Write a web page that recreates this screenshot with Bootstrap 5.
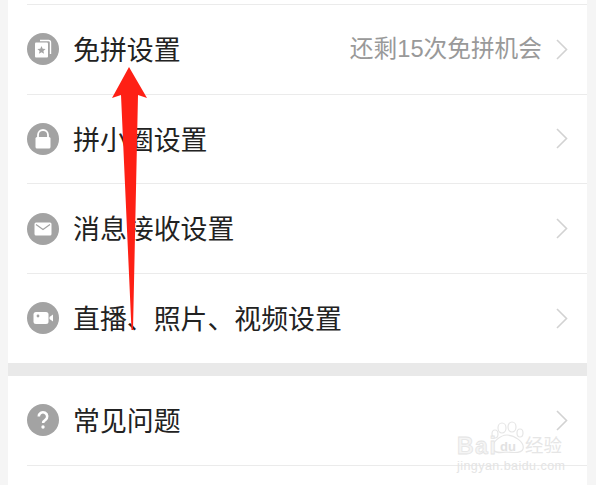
<!DOCTYPE html>
<html lang="zh-CN">
<head>
    <meta charset="UTF-8">
    <meta name="viewport" content="width=device-width, initial-scale=1">
    <title>设置</title>
    <link href="https://cdn.jsdelivr.net/npm/bootstrap@5.3.0/dist/css/bootstrap.min.css" rel="stylesheet">
    <script src="https://cdn.jsdelivr.net/npm/bootstrap@5.3.0/dist/js/bootstrap.bundle.min.js"></script>
    <style>
        html, body {
            height: 485px;
            overflow: hidden;
        }
        body {
            background: #f5f5f5;
            font-family: "Liberation Sans", "Noto Sans CJK SC", sans-serif;
            position: relative;
        }
        .panel {
            margin: 0 9px 0 8px;
            background: #fff;
            height: 485px;
            overflow: hidden;
        }
        .top-strip {
            height: 4px;
        }
        .set-row {
            height: 89.67px;
            margin-left: 19px;
            border-top: 1px solid #ebebeb;
            padding-right: 19px;
        }
        .set-row.no-line {
            border-top: 0;
        }
        .set-row.tail-row {
            height: 19px;
        }
        .ico {
            width: 32px;
            height: 32px;
            border-radius: 50%;
            background: #a3a3a3;
            flex: none;
        }
        .ico svg {
            display: block;
        }
        .set-name {
            font-size: 26.9px;
            line-height: 1;
            color: #222;
            margin-left: 14px;
            padding-top: 4px;
        }
        .set-hint {
            font-size: 23.7px;
            line-height: 1;
            color: #999;
            margin-right: 14px;
            padding-top: 1px;
        }
        .sect-gap {
            height: 13px;
            background: #e9e9e9;
        }
        .arrow-mark {
            position: absolute;
            left: 0;
            top: 0;
        }
        .wm {
            position: absolute;
            left: 457px;
            top: 420px;
            width: 110px;
            height: 60px;
            color: #f5f5f5;
        }
        .wm-paw {
            position: absolute;
            left: 32px;
            top: 1px;
        }
        .wm-bai {
            position: absolute;
            left: 0;
            top: 15px;
            font-size: 23px;
            font-weight: 700;
            line-height: 1;
            letter-spacing: 1.5px;
            -webkit-text-stroke: .8px #e4e4e4;
        }
        .wm-du {
            position: absolute;
            left: 43px;
            top: 20px;
            font-size: 13px;
            font-weight: 700;
            line-height: 1;
            color: #e2e2e2;
        }
        .wm-cn {
            position: absolute;
            left: 68px;
            top: 17px;
            font-size: 18.5px;
            line-height: 1;
            color: #e6e6e6;
        }
        .wm-url {
            position: absolute;
            left: 0;
            top: 40px;
            font-size: 12.5px;
            line-height: 1;
            letter-spacing: .45px;
            white-space: nowrap;
            color: #e4e4e4;
        }
    </style>
</head>
<body>
    <div class="panel">
        <div class="top-strip"></div>

        <div class="set-row d-flex align-items-center">
            <span class="ico d-flex align-items-center justify-content-center">
                <svg width="32" height="32" viewBox="0 0 32 32">
                    <path d="M13 7.5h8.5a2 2 0 0 1 2 2v11.5" fill="none" stroke="#fff" stroke-width="1.4"/>
                    <rect x="8" y="9.5" width="13" height="15" rx="1" fill="#fff"/>
                    <path d="M14.5 13l1.2 2.7 2.9.3-2.2 1.9.7 2.9-2.6-1.5-2.6 1.5.7-2.9-2.2-1.9 2.9-.3z" fill="#a3a3a3"/>
                </svg>
            </span>
            <span class="set-name">免拼设置</span>
            <span class="set-hint ms-auto">还剩15次免拼机会</span>
            <svg width="12" height="21" viewBox="0 0 12 21"><path d="M1 1l9.5 9.5L1 20" fill="none" stroke="#d2d2d2" stroke-width="1.6"/></svg>
        </div>

        <div class="set-row d-flex align-items-center">
            <span class="ico d-flex align-items-center justify-content-center">
                <svg width="32" height="32" viewBox="0 0 32 32">
                    <path d="M11 15v-3a5 5 0 0 1 10 0v3" fill="none" stroke="#fff" stroke-width="1.8"/>
                    <rect x="8.5" y="14" width="15" height="11.5" rx="1.5" fill="#fff"/>
                </svg>
            </span>
            <span class="set-name">拼小圈设置</span>
            <svg class="ms-auto" width="12" height="21" viewBox="0 0 12 21"><path d="M1 1l9.5 9.5L1 20" fill="none" stroke="#d2d2d2" stroke-width="1.6"/></svg>
        </div>

        <div class="set-row d-flex align-items-center">
            <span class="ico d-flex align-items-center justify-content-center">
                <svg width="32" height="32" viewBox="0 0 32 32">
                    <rect x="7.5" y="9.5" width="17" height="13" rx="1.5" fill="#fff"/>
                    <path d="M9 11.5l7 5 7-5" fill="none" stroke="#a3a3a3" stroke-width="1.2"/>
                </svg>
            </span>
            <span class="set-name">消息接收设置</span>
            <svg class="ms-auto" width="12" height="21" viewBox="0 0 12 21"><path d="M1 1l9.5 9.5L1 20" fill="none" stroke="#d2d2d2" stroke-width="1.6"/></svg>
        </div>

        <div class="set-row d-flex align-items-center">
            <span class="ico d-flex align-items-center justify-content-center">
                <svg width="32" height="32" viewBox="0 0 32 32">
                    <rect x="6.5" y="10" width="15" height="12" rx="2.5" fill="#fff"/>
                    <path d="M22.5 15l3.5-2.5v7L22.5 17z" fill="#fff"/>
                    <circle cx="11" cy="14" r="1.4" fill="#a3a3a3"/>
                </svg>
            </span>
            <span class="set-name">直播、照片、视频设置</span>
            <svg class="ms-auto" width="12" height="21" viewBox="0 0 12 21"><path d="M1 1l9.5 9.5L1 20" fill="none" stroke="#d2d2d2" stroke-width="1.6"/></svg>
        </div>

        <div class="sect-gap"></div>

        <div class="set-row no-line d-flex align-items-center">
            <span class="ico d-flex align-items-center justify-content-center">
                <svg width="32" height="32" viewBox="0 0 32 32">
                    <path d="M11.8 12.5a4.2 4.2 0 1 1 6.6 3.4c-1.5 1-2.3 1.7-2.3 3.2" fill="none" stroke="#fff" stroke-width="2.6"/>
                    <circle cx="16" cy="23" r="1.7" fill="#fff"/>
                </svg>
            </span>
            <span class="set-name">常见问题</span>
            <svg class="ms-auto" width="12" height="21" viewBox="0 0 12 21"><path d="M1 1l9.5 9.5L1 20" fill="none" stroke="#d2d2d2" stroke-width="1.6"/></svg>
        </div>

        <div class="set-row tail-row"></div>
    </div>

    <!-- red annotation arrow drawn over the list -->
    <svg class="arrow-mark" width="596" height="485" viewBox="0 0 596 485">
        <path d="M129 67L147 98 138 95 133 330 131.5 330 121 95 112 98z" fill="#fe2015"/>
    </svg>

    <!-- baidu jingyan watermark -->
    <div class="wm">
        <svg class="wm-paw" width="38" height="36" viewBox="0 0 38 36">
            <g fill="none" stroke="#e6e6e6" stroke-width="1.2">
                <ellipse cx="13" cy="7" rx="4" ry="5"/>
                <ellipse cx="23" cy="6" rx="4" ry="5"/>
                <ellipse cx="6" cy="13" rx="3" ry="4"/>
                <ellipse cx="31" cy="12" rx="3" ry="4"/>
                <path d="M18 14c-6 0-16 7-14 14 1 4 6 4 14 3 8 1 15 1 16-3 2-7-9-14-16-14z"/>
            </g>
        </svg>
        <span class="wm-bai">Bai</span>
        <span class="wm-du">du</span>
        <span class="wm-cn">经验</span>
        <span class="wm-url">jingyan.baidu.com</span>
    </div>
</body>
</html>
